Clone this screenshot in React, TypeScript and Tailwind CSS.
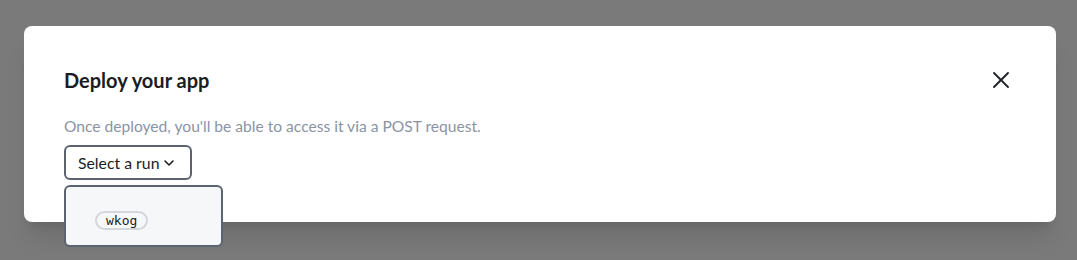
import { X, ChevronDown } from 'lucide-react'

export default function App() {
  return (
    <div className="h-[260px] w-full bg-[#7a7a7a] pl-6 pr-[21px] pt-[26px] font-['Lato','Noto_Sans',sans-serif]">
      <div className="relative h-[196px] rounded-lg bg-white px-10 pt-[42px] shadow-xl">
        <button className="absolute right-[41px] top-[40px] text-[#1f2328]">
          <X className="h-7 w-7" strokeWidth={1.6} />
        </button>
        <h2 className="text-[20px] font-bold leading-6 text-[#1a1d21]">Deploy your app</h2>
        <p className="mt-[24px] text-[15.6px] leading-5 text-[#8a94a3]">
          Once deployed, you'll be able to access it via a POST request.
        </p>
        <div className="relative mt-[9px]">
          <button className="box-border flex h-[35px] items-center rounded-md border-2 border-[#5c6370] bg-white pl-3 pr-[13px] text-[15.8px] text-[#1a1d21]">
            Select a run
            <ChevronDown className="ml-[2px] h-4 w-4" strokeWidth={2.4} />
          </button>
          <div className="absolute left-0 top-[40px] z-10 h-[62px] w-[159px] rounded-md border-2 border-[#5c6370] bg-[#f6f7f9] pl-[29px] pt-[20px]">
            <span className="inline-block rounded-full border-2 border-[#d3d6db] px-[9px] font-['DejaVu_Sans_Mono',monospace] text-[13px] leading-[15px] text-[#1a1d21]">
              wkog
            </span>
          </div>
        </div>
      </div>
    </div>
  )
}
